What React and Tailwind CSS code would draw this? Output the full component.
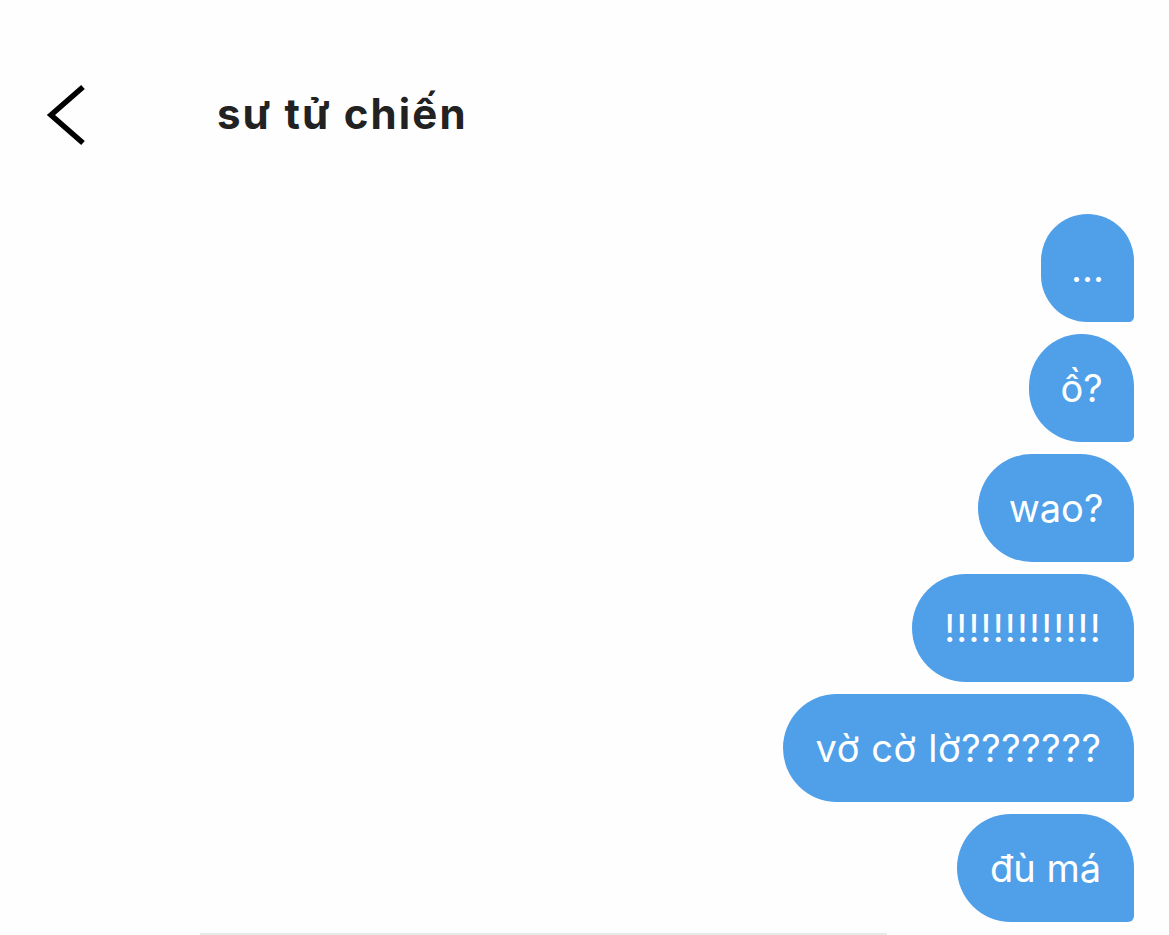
import React from 'react';

const messages = [
  { text: '...', w: 'w-[93px]' },
  { text: 'ồ?', w: 'w-[105px]' },
  { text: 'wao?', w: 'w-[156px]' },
  { text: '!!!!!!!!!!!!!', w: 'w-[222px] tracking-[1.2px]' },
  { text: 'vờ cờ lờ???????', w: 'w-[351px] tracking-[0.6px]' },
  { text: 'đù má', w: 'w-[177px]' },
];

const App = () => {
  return (
    <div
      className="w-[1169px] h-[935px] bg-[#fefefe] flex flex-col overflow-hidden"
      style={{ fontFamily: 'Inter, "Noto Sans", sans-serif' }}
    >
      {/* header */}
      <div className="h-[214px] flex items-start pt-[84px]">
        <div className="w-[217px] pl-[46px]">
          <svg width="42" height="62" viewBox="0 0 42 62" fill="none">
            <path d="M37 3 L5 31 L37 59" stroke="#000" strokeWidth="5.5" />
          </svg>
        </div>
        <h1 className="text-[42px] leading-[60px] font-bold text-[#222] tracking-[2.1px]">sư tử chiến</h1>
      </div>

      {/* messages */}
      <div className="flex flex-col items-end gap-3 pr-[35px]">
        {messages.map((m, i) => (
          <div
            key={i}
            className={`${m.w} h-[108px] flex items-center justify-center bg-[#4f9fe9] text-white text-[38px] rounded-[54px] rounded-br-[6px]`}
          >
            {m.text}
          </div>
        ))}
      </div>

      <div className="ml-[200px] mt-auto w-[687px] h-[2px] bg-[#e6e9e8]" />
    </div>
  );
};

export default App;
